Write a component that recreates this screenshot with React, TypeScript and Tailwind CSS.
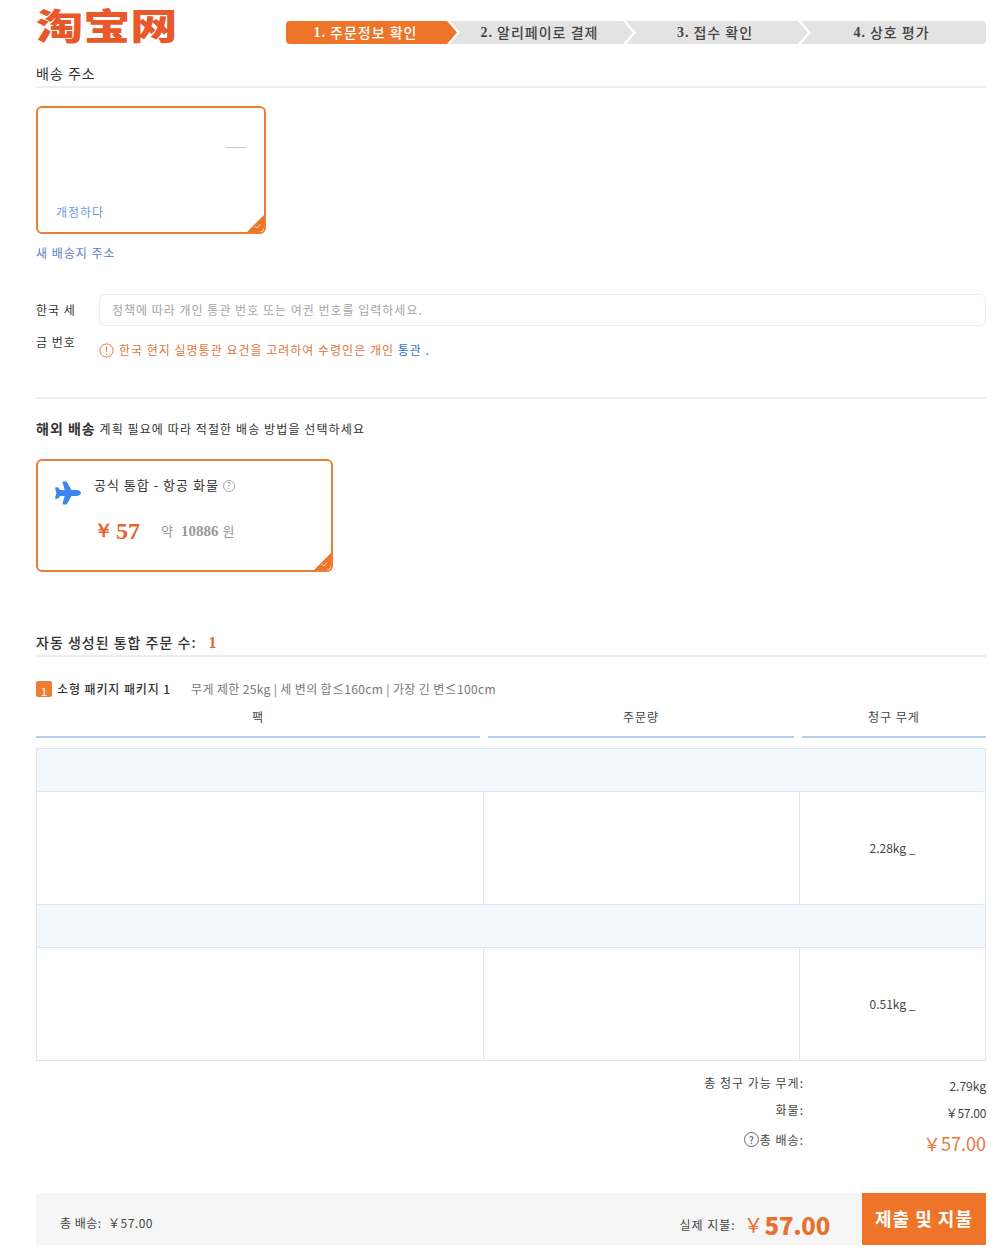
import { FaPlane } from 'react-icons/fa';

function CornerCheck() {
  return (
    <div className="absolute right-0 bottom-0 w-[17px] h-[17px] bg-[#ee7429] [clip-path:polygon(100%_0,100%_100%,0_100%)] rounded-br-[5px]">
      <svg viewBox="0 0 8 6" className="absolute right-[3px] bottom-[3px] w-[7px] h-[5px]" fill="none" stroke="#ffffff" strokeWidth="1">
        <path d="M0.5 2.5 L3 5 L7.5 0.5" />
      </svg>
    </div>
  );
}

function SectionTitle({ children }: { children: React.ReactNode }) {
  return (
    <div className="h-[27px] border-b-2 border-[#eeeeee] text-[14px] leading-[24px] tracking-[1px] text-[#333333]">
      {children}
    </div>
  );
}

const steps = [
  { n: '1.', label: '주문정보 확인', w: 'w-[171px]', active: true },
  { n: '2.', label: '알리페이로 결제', w: 'w-[183px]', active: false },
  { n: '3.', label: '접수 확인', w: 'w-[182px]', active: false },
  { n: '4.', label: '상호 평가', w: 'w-[185px]', active: false },
];

function Stepper() {
  return (
    <div className="flex w-[700px] h-[23px] mt-[21px]">
      {steps.map((s, i) => (
        <div
          key={s.n}
          className={`${s.w} ${i > 0 ? '-ml-[7px] pr-[4px]' : 'rounded-l-[4px] pr-[12px]'} ${
            s.active
              ? 'bg-[#ee7429] text-white [clip-path:polygon(0_0,calc(100%-10px)_0,100%_50%,calc(100%-10px)_100%,0_100%)]'
              : i === 3
              ? 'bg-[#e3e3e3] text-[#444444] rounded-r-[4px] [clip-path:polygon(0_0,100%_0,100%_100%,0_100%,10px_50%)]'
              : 'bg-[#e3e3e3] text-[#444444] [clip-path:polygon(0_0,calc(100%-10px)_0,100%_50%,calc(100%-10px)_100%,0_100%,10px_50%)]'
          } flex items-center justify-center text-[14px] tracking-[1px] font-medium`}
        >
          <span className="font-['Liberation_Serif'] font-bold mr-[4px]">{s.n}</span>
          {s.label}
        </div>
      ))}
    </div>
  );
}

function TableRows({ weight }: { weight: string }) {
  return (
    <>
      <div className="h-[43px] bg-[#f3f7fe] border-b border-[#dfe6f2]" />
      <div className="flex h-[113px] last:h-[112px] border-b border-[#dfe6f2] last:border-b-0">
        <div className="w-[447px] border-r border-[#dfe6f2]" />
        <div className="w-[316px] border-r border-[#dfe6f2]" />
        <div className="flex-1 flex items-center justify-center text-[12px] text-[#444444]">{weight} _</div>
      </div>
    </>
  );
}

export default function App() {
  return (
    <div className="w-[1008px] h-[1260px] bg-white pl-[36px] pr-[22px] font-['Noto_Sans_CJK_KR','Noto_Sans',sans-serif] text-[12px] text-[#333333]">
      {/* header */}
      <div className="flex justify-between h-[61px]">
        <div className="h-[48px] origin-left scale-x-[1.31] text-[36px] leading-[48px] font-black text-[#e9582a] font-['Noto_Sans_CJK_SC',sans-serif]">淘宝网</div>
        <Stepper />
      </div>

      <SectionTitle>배송 주소</SectionTitle>

      <div className="relative mt-[18px] w-[230px] h-[128px] rounded-[6px] border-2 border-[#ee7d36] overflow-hidden">
        <div className="absolute right-[18px] top-[39px] w-[20px] border-t border-[#cccccc]" />
        <div className="absolute left-[18px] bottom-[11px] text-[#6c9ad8] tracking-[1px]">개정하다</div>
        <CornerCheck />
      </div>
      <div className="mt-[10px] text-[#5b80bd] tracking-[1px] leading-[18px]">새 배송지 주소</div>

      {/* id number */}
      <div className="flex mt-[32px]">
        <div className="w-[63px] pr-[20px] leading-[32px] tracking-[1px] text-[#333333]">한국 세금 번호</div>
        <div className="flex-1">
          <div className="h-[32px] border border-[#eeeeee] rounded-[6px] pl-[12px] flex items-center text-[#a6a6a6] tracking-[1px]">
            정책에 따라 개인 통관 번호 또는 여권 번호를 입력하세요.
          </div>
          <div className="flex items-center mt-[15px] h-[18px] text-[#e0763c] tracking-[1px]">
            <svg viewBox="0 0 16 16" className="w-[15px] h-[15px] mr-[5px]" fill="none" stroke="#e0763c">
              <circle cx="8" cy="8" r="7" />
              <path d="M8 3.5 V9.5 M8 11 V12.5" />
            </svg>
            한국 현지 실명통관 요건을 고려하여 수령인은 개인&nbsp;<span className="text-[#2f6fc4]">통관 .</span>
          </div>
        </div>
      </div>

      <div className="mt-[38px] border-t-2 border-[#eeeeee]" />

      <div className="mt-[19px] leading-[20px] tracking-[1.1px] text-[#333333]">
        <span className="text-[14px] font-bold tracking-[1px]">해외 배송</span> 계획 필요에 따라 적절한 배송 방법을 선택하세요
      </div>

      {/* shipping card */}
      <div className="relative mt-[20px] w-[297px] h-[113px] rounded-[6px] border-2 border-[#ee7d36] overflow-hidden">
        <FaPlane className="absolute left-[17px] top-[20px] w-[26px] h-[24px] text-[#3b86f0]" />
        <div className="ml-[56px] mt-[15px] flex items-center leading-[18px] text-[13px] text-[#333333] tracking-[1px]">
          공식 통합 - 항공 화물
          <span className="ml-[4px] mt-[2px] w-[12px] h-[12px] rounded-full border border-[#aaaaaa] text-[#999999] text-[9px] leading-[10px] text-center tracking-normal">?</span>
        </div>
        <div className="ml-[56px] mt-[23px] h-[28px] flex items-center">
          <span className="text-[19px] font-bold text-[#e2672e] font-['Liberation_Serif',serif]">￥</span>
          <span className="ml-[3px] text-[24px] font-bold text-[#e2672e] font-['Liberation_Serif',serif]">57</span>
          <span className="ml-[21px] text-[13px] text-[#999999]">약</span>
          <span className="ml-[8px] text-[15px] font-bold text-[#999999] font-['Liberation_Serif',serif]">10886</span>
          <span className="ml-[4px] text-[13px] text-[#999999]">원</span>
        </div>
        <CornerCheck />
      </div>

      <div className="mt-[58px]">
        <SectionTitle>
          <span className="font-medium">자동 생성된 통합 주문 수:</span>
          <span className="ml-[12px] font-bold text-[#e2672e] font-['Liberation_Serif',serif] text-[16px]">1</span>
        </SectionTitle>
      </div>

      {/* package */}
      <div className="flex items-center mt-[23px] h-[18px]">
        <div className="w-[16px] h-[16px] rounded-[2px] bg-[#ee7d36] text-white text-[11px] leading-[20px] text-center">1</div>
        <span className="ml-[5px] font-medium text-[#333333] tracking-[0.9px]">소형 패키지 패키지 1</span>
        <span className="ml-[20px] text-[#777777] tracking-[0.35px]">무게 제한 25kg | 세 변의 합≤160cm | 가장 긴 변≤100cm</span>
      </div>

      <div className="flex gap-[8px] mt-[10px] text-center text-[#444444] tracking-[1px]">
        <div className="w-[444px] h-[30px] border-b-2 border-[#b8cff0] leading-[18px]">팩</div>
        <div className="w-[306px] h-[30px] border-b-2 border-[#b8cff0] leading-[18px]">주문량</div>
        <div className="w-[184px] h-[30px] border-b-2 border-[#b8cff0] leading-[18px]">청구 무게</div>
      </div>

      <div className="mt-[10px] h-[313px] border border-[#dfe6f2]">
        <TableRows weight="2.28kg" />
        <TableRows weight="0.51kg" />
      </div>

      {/* summary */}
      <div className="mt-[13px] text-[#444444]">
        <div className="flex h-[27px]">
          <div className="w-[768px] text-right tracking-[1px] leading-[18px]">총 청구 가능 무게:</div>
          <div className="flex-1 text-right leading-[24px]">2.79kg</div>
        </div>
        <div className="flex h-[30px]">
          <div className="w-[768px] text-right tracking-[1px] leading-[18px]">화물:</div>
          <div className="flex-1 text-right leading-[24px] tracking-[-0.3px]">￥57.00</div>
        </div>
        <div className="flex h-[30px]">
          <div className="w-[768px] flex justify-end tracking-[1px] leading-[18px]">
            <span className="w-[15px] h-[15px] mt-[1px] mr-[1px] rounded-full border border-[#666666] text-[10px] leading-[13px] text-center tracking-normal">?</span>
            총 배송:
          </div>
          <div className="flex-1 text-right text-[18px] leading-[24px] text-[#e9783f]">￥57.00</div>
        </div>
      </div>

      {/* bottom bar */}
      <div className="flex items-center mt-[32px] h-[52px] bg-[#f6f6f6]">
        <div className="ml-[24px] flex-1 text-[#444444] tracking-[0.5px] mt-[8px]">총 배송:&nbsp; ￥57.00</div>
        <div className="mr-[10px] flex items-center mt-[11px]">
          <span className="mr-[8px] text-[#444444] tracking-[1px]">실제 지불:</span>
          <span className="text-[20px] font-normal text-[#e9702f] mr-[1px]">￥</span>
          <span className="text-[24px] font-extrabold tracking-[-0.3px] text-[#e9702f]">57.00</span>
        </div>
        <div className="ml-[22px] w-[124px] h-full bg-[#ee7429] text-white text-[18px] font-bold tracking-[1px] flex items-center justify-center pb-[2px]">
          제출 및 지불
        </div>
      </div>
    </div>
  );
}
